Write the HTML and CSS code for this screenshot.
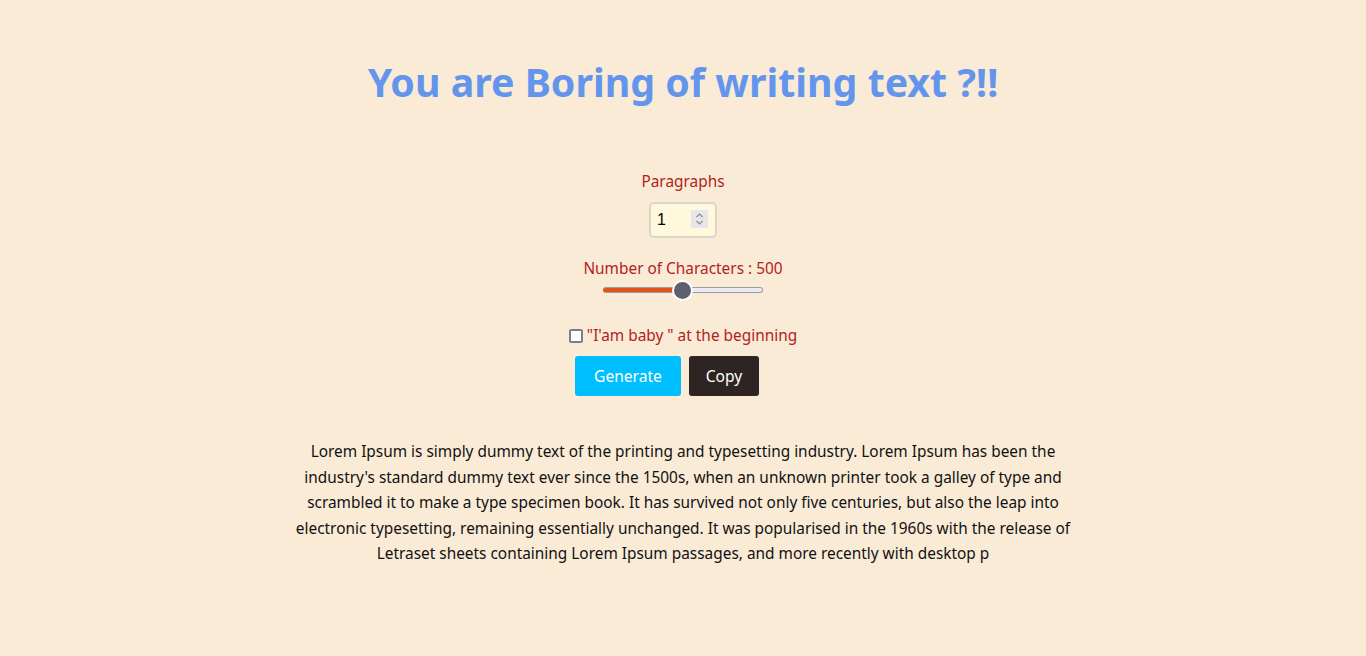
FILE: index.html
```html
<!DOCTYPE html>
<html lang="en">
<head>
<meta charset="utf-8">
<title>Lorem generator</title>
<link rel="stylesheet" href="styles.css">
</head>
<body>
<main class="app">
  <h1 class="title">You are Boring of writing text ?!!</h1>
  <form class="controls">
    <label class="label" for="paras">Paragraphs</label>
    <div class="num-wrap">
      <input class="num" id="paras" type="number" value="1" min="1">
      <svg class="spin" width="17" height="18" viewBox="0 0 17 18" aria-hidden="true">
        <rect width="17" height="18" fill="#e9e6ea"/>
        <path d="M5.5 7 L8.5 4 L11.5 7" fill="none" stroke="#8a8a94" stroke-width="1.2"/>
        <path d="M5.5 11 L8.5 14 L11.5 11" fill="none" stroke="#8a8a94" stroke-width="1.2"/>
      </svg>
    </div>
    <label class="label chars" for="chars">Number of Characters : 500</label>
    <input class="range" id="chars" type="range" min="0" max="1000" value="500">
    <div class="check-row">
      <input class="check" id="baby" type="checkbox">
      <label class="label" for="baby">"I'am baby " at the beginning</label>
    </div>
    <div class="buttons">
      <button type="button" class="btn gen">Generate</button>
      <button type="button" class="btn copy">Copy</button>
    </div>
  </form>
  <p class="output">Lorem Ipsum is simply dummy text of the printing and typesetting industry. Lorem Ipsum has been the industry's standard dummy text ever since the 1500s, when an unknown printer took a galley of type and scrambled it to make a type specimen book. It has survived not only five centuries, but also the leap into electronic typesetting, remaining essentially unchanged. It was popularised in the 1960s with the release of Letraset sheets containing Lorem Ipsum passages, and more recently with desktop p</p>
</main>
</body>
</html>
```
FILE: styles.css
```css
html, body {
  margin: 0;
  padding: 0;
}
body {
  background: #faebd7;
  font-family: "Noto Sans", "Open Sans", sans-serif;
  color: #111;
}
.app {
  display: flex;
  flex-direction: column;
  align-items: center;
  padding-top: 56px;
}
.title {
  margin: 0;
  font-size: 39.3px;
  line-height: 52px;
  font-weight: 700;
  color: #6495ed;
}
.controls {
  display: flex;
  flex-direction: column;
  align-items: center;
  margin-top: 63px;
}
.label {
  color: #b22222;
  font-size: 15.4px;
  line-height: 22px;
}
.num-wrap {
  position: relative;
  margin-top: 9px;
  width: 68px;
  height: 36px;
}
.num {
  display: block;
  width: 68px;
  height: 36px;
  box-sizing: border-box;
  border: 2px solid #ddd5c6;
  border-radius: 5px;
  background: #fff8dc;
  font-family: "Liberation Sans", Arial, sans-serif;
  font-size: 16px;
  padding: 0 5px 0 6px;
  color: #000;
  -moz-appearance: textfield;
}
.num::-webkit-inner-spin-button,
.num::-webkit-outer-spin-button {
  -webkit-appearance: none;
  margin: 0;
}
.spin {
  position: absolute;
  left: 42px;
  top: 8px;
  pointer-events: none;
}
.chars {
  margin-top: 20px;
}
.range {
  -webkit-appearance: none;
  appearance: none;
  margin: 0;
  width: 160px;
  height: 20px;
  background: transparent;
}
.range::-webkit-slider-runnable-track {
  height: 6px;
  border-radius: 3px;
  box-sizing: border-box;
  background: linear-gradient(to right, #e2531b 0 50%, #ebeaf2 50% 100%);
  border: 1px solid #9b9aa9;
  border-left-color: #e2531b;
}
.range::-webkit-slider-thumb {
  -webkit-appearance: none;
  appearance: none;
  width: 21px;
  height: 21px;
  border-radius: 50%;
  background: #5f606f;
  border: 2px solid #fff;
  box-sizing: border-box;
  margin-top: -8.5px;
}
.check-row {
  margin-top: 25px;
  display: flex;
  align-items: center;
  gap: 4px;
}
.check {
  -webkit-appearance: none;
  appearance: none;
  margin: 0;
  width: 14px;
  height: 14px;
  box-sizing: border-box;
  border: 2px solid #7b7b8a;
  border-radius: 2px;
  background: #fff;
}
.buttons {
  margin-top: 9px;
  display: flex;
  gap: 8px;
  padding-right: 32px;
}
.btn {
  height: 40px;
  border: none;
  border-radius: 3px;
  color: #fff;
  font-family: inherit;
  font-size: 15.6px;
  padding: 0 10px;
}
.gen {
  background: #00bfff;
  width: 106px;
}
.copy {
  background: #2e2424;
  width: 70px;
}
.output {
  margin: 43px 0 0;
  width: 800px;
  text-align: center;
  font-size: 15.4px;
  line-height: 25.5px;
  color: #111;
}
```
